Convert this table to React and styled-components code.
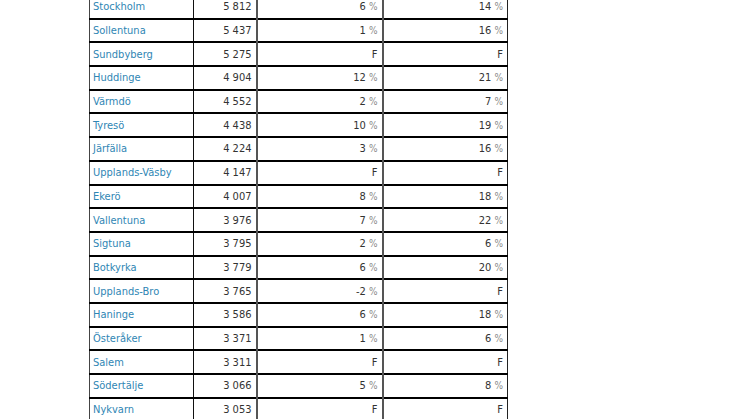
import React from "react";
import styled, { createGlobalStyle } from "styled-components";

const Global = createGlobalStyle`
  html, body { margin: 0; padding: 0; background: #fff; }
  body { font-family: "DejaVu Sans Condensed", "DejaVu Sans", sans-serif; overflow: hidden; }
`;

const Page = styled.div`
  width: 746px;
  height: 419px;
  overflow: hidden;
  padding-left: 89px;
  box-sizing: border-box;
`;

const Table = styled.table`
  border-collapse: collapse;
  margin-top: -6px;
  table-layout: fixed;
  width: 418px;
  font-size: 11px;
`;

const Row = styled.tr`
  height: 23.7px;
  border-top: 2px solid #000;
  border-bottom: 2px solid #000;
`;

const NameCell = styled.td`
  width: 104px;
  padding: 0 3px;
  color: #2f86b4;
  text-align: left;
  border-left: 1px solid #444;
  border-right: 1px solid #111;
  white-space: nowrap;
`;

const NumCell = styled.td`
  width: ${(p) => p.$w}px;
  padding: 0 4px 0 0;
  color: #333;
  text-align: right;
  border-right: ${(p) => p.$border};
  white-space: nowrap;
`;

const Pct = styled.span`
  color: #8a8a8a;
  font-size: 10px;
`;

const rows = [
  ["Stockholm", "5 812", "6", "14"],
  ["Sollentuna", "5 437", "1", "16"],
  ["Sundbyberg", "5 275", "F", "F"],
  ["Huddinge", "4 904", "12", "21"],
  ["Värmdö", "4 552", "2", "7"],
  ["Tyresö", "4 438", "10", "19"],
  ["Järfälla", "4 224", "3", "16"],
  ["Upplands-Väsby", "4 147", "F", "F"],
  ["Ekerö", "4 007", "8", "18"],
  ["Vallentuna", "3 976", "7", "22"],
  ["Sigtuna", "3 795", "2", "6"],
  ["Botkyrka", "3 779", "6", "20"],
  ["Upplands-Bro", "3 765", "-2", "F"],
  ["Haninge", "3 586", "6", "18"],
  ["Österåker", "3 371", "1", "6"],
  ["Salem", "3 311", "F", "F"],
  ["Södertälje", "3 066", "5", "8"],
  ["Nykvarn", "3 053", "F", "F"],
];

const Value = ({ v }) =>
  v === "F" ? (
    <>F</>
  ) : (
    <>
      {v} <Pct>%</Pct>
    </>
  );

export default function App() {
  return (
    <Page>
      <Global />
      <Table>
        <colgroup>
          <col style={{ width: 104 }} />
          <col style={{ width: 63 }} />
          <col style={{ width: 126 }} />
          <col style={{ width: 125 }} />
        </colgroup>
        <tbody>
          {rows.map(([name, n, a, b]) => (
            <Row key={name}>
              <NameCell>{name}</NameCell>
              <NumCell $w={63} $border="2px solid #555">{n}</NumCell>
              <NumCell $w={126} $border="2px solid #555">
                <Value v={a} />
              </NumCell>
              <NumCell $w={125} $border="1px solid #222">
                <Value v={b} />
              </NumCell>
            </Row>
          ))}
        </tbody>
      </Table>
    </Page>
  );
}
